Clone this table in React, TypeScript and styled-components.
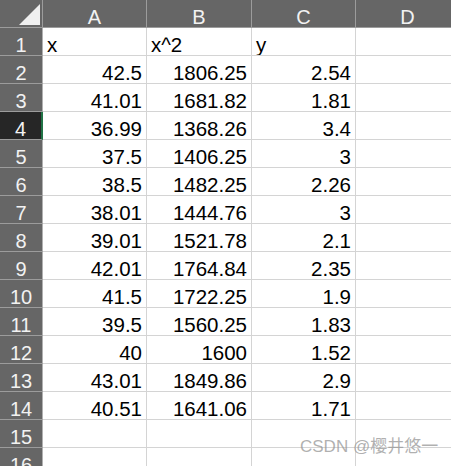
import React from "react";
import styled, { createGlobalStyle, css } from "styled-components";

const Global = createGlobalStyle`
  html, body {
    margin: 0;
    padding: 0;
    background: #ffffff;
    overflow: hidden;
  }
  #root {
    width: 451px;
    height: 466px;
    overflow: hidden;
  }
`;

const Sheet = styled.div`
  position: relative;
  width: 451px;
  height: 466px;
  overflow: hidden;
  background: #ffffff;
`;

const Grid = styled.div`
  display: grid;
  grid-template-columns: 43px 104px 105px 104px 104px;
  grid-auto-rows: 28px;
  width: 460px;
  font-family: "Liberation Sans", Arial, sans-serif;
`;

const HeaderBase = css`
  box-sizing: border-box;
  background: #666666;
  color: #f2f2f2;
  font-size: 20px;
  line-height: 1;
  display: flex;
  align-items: flex-end;
  justify-content: center;
  border-right: 1px solid #9c9c9c;
  border-bottom: 1px solid #9c9c9c;
`;

const Corner = styled.div`
  ${HeaderBase};
  justify-content: flex-end;
  padding: 0 2px 2px 0;
`;

const Triangle = styled.div`
  width: 21px;
  height: 21px;
  background: #efefef;
  clip-path: polygon(100% 0, 100% 100%, 0 100%);
`;

const ColHeader = styled.div`
  ${HeaderBase};
`;

const RowHeader = styled.div<{ $selected?: boolean }>`
  ${HeaderBase};
  border-right-color: #b0b0b0;
  ${(p) =>
    p.$selected &&
    css`
      background: #262626;
      border-right: 2px solid #217346;
    `}
`;

const Cell = styled.div<{ $align?: "left" | "right" }>`
  box-sizing: border-box;
  border-right: 1px solid #d4d4d4;
  border-bottom: 1px solid #d4d4d4;
  color: #000000;
  font-size: 20.5px;
  line-height: 1;
  display: flex;
  align-items: flex-end;
  justify-content: ${(p) => (p.$align === "left" ? "flex-start" : "flex-end")};
  padding: 0 4px 0 4px;
  white-space: nowrap;
  overflow: hidden;
`;

const Watermark = styled.div`
  position: absolute;
  left: 300px;
  top: 437px;
  font-family: "Liberation Sans", "Noto Sans CJK SC", sans-serif;
  font-size: 17px;
  line-height: 20px;
  color: rgba(150, 150, 150, 0.75);
  white-space: nowrap;
  pointer-events: none;
`;

const columns = ["A", "B", "C", "D"];

const rows: (string | number)[][] = [
  ["x", "x^2", "y"],
  [42.5, 1806.25, 2.54],
  [41.01, 1681.82, 1.81],
  [36.99, 1368.26, 3.4],
  [37.5, 1406.25, 3],
  [38.5, 1482.25, 2.26],
  [38.01, 1444.76, 3],
  [39.01, 1521.78, 2.1],
  [42.01, 1764.84, 2.35],
  [41.5, 1722.25, 1.9],
  [39.5, 1560.25, 1.83],
  [40, 1600, 1.52],
  [43.01, 1849.86, 2.9],
  [40.51, 1641.06, 1.71],
  [],
  [],
];

export default function App() {
  return (
    <Sheet>
      <Global />
      <Grid>
        <Corner>
          <Triangle />
        </Corner>
        {columns.map((c) => (
          <ColHeader key={c}>{c}</ColHeader>
        ))}
        {rows.map((r, i) => (
          <React.Fragment key={i}>
            <RowHeader $selected={i === 3}>{i + 1}</RowHeader>
            {columns.map((c, j) => {
              const v = r[j];
              return (
                <Cell key={c} $align={typeof v === "string" ? "left" : "right"}>
                  {v === undefined ? "" : String(v)}
                </Cell>
              );
            })}
          </React.Fragment>
        ))}
      </Grid>
      <Watermark>CSDN @樱井悠一</Watermark>
    </Sheet>
  );
}
